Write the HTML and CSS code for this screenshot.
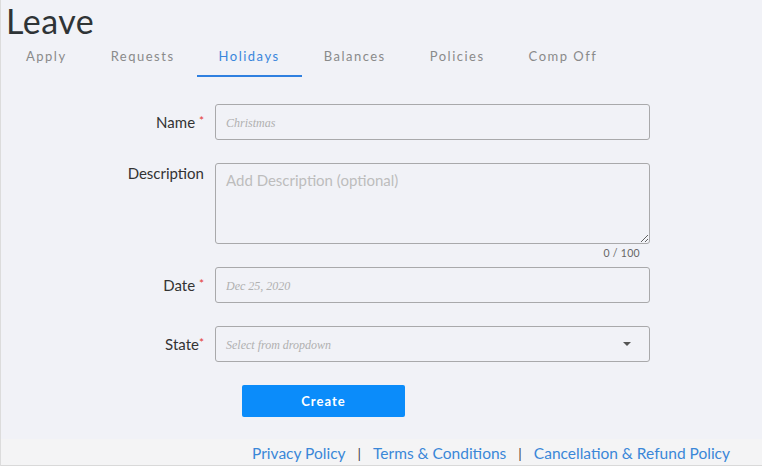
FILE: index.html
```html
<!DOCTYPE html>
<html>
<head>
<meta charset="utf-8">
<link rel="stylesheet" href="styles.css">
</head>
<body>
<div class="page">
  <main class="main">
    <h1 class="title">Leave</h1>
    <nav class="tabs">
      <a class="tab">Apply</a>
      <a class="tab">Requests</a>
      <a class="tab active">Holidays</a>
      <a class="tab">Balances</a>
      <a class="tab">Policies</a>
      <a class="tab">Comp Off</a>
    </nav>
    <form class="form">
      <label class="label">Name <span class="req">*</span></label>
      <input class="field input" type="text" placeholder="Christmas">

      <label class="label label-top">Description</label>
      <div class="area-wrap">
        <textarea class="field area" placeholder="Add Description (optional)"></textarea>
        <div class="counter">0 / 100</div>
      </div>

      <label class="label">Date <span class="req">*</span></label>
      <input class="field input" type="text" placeholder="Dec 25, 2020">

      <label class="label">State<span class="req">*</span></label>
      <div class="field select">
        <span class="select-ph">Select from dropdown</span>
        <span class="caret"></span>
      </div>

      <div></div>
      <div class="actions"><button type="button" class="btn">Create</button></div>
    </form>
  </main>
  <footer class="footer">
    <a class="flink">Privacy Policy</a>
    <span class="sep">|</span>
    <a class="flink">Terms &amp; Conditions</a>
    <span class="sep">|</span>
    <a class="flink">Cancellation &amp; Refund Policy</a>
  </footer>
</div>
</body>
</html>
```
FILE: styles.css
```css
* { box-sizing: border-box; }
html, body { margin: 0; padding: 0; }
body {
  font-family: "Lato", "Noto Sans", sans-serif;
  background: #f1f2f7;
  color: #333;
  width: 762px;
  height: 466px;
  overflow: hidden;
}
.page {
  height: 466px;
  border-left: 1px solid #dcdcdc;
  display: flex;
  flex-direction: column;
}
.main { flex: 1; }
.title {
  margin: 0;
  padding: 0 0 0 5px;
  font-size: 34px;
  font-weight: 400;
  line-height: 41px;
  letter-spacing: 0.5px;
  color: #2f3436;
}
.tabs {
  display: flex;
  margin-top: -1px;
  padding-left: 3px;
}
.tab {
  padding: 8px 22px 10px;
  font-size: 13px;
  line-height: 17px;
  letter-spacing: 1.5px;
  color: #8a8a8a;
  border-bottom: 2px solid transparent;
}
.tab.active {
  color: #3a86dc;
  border-bottom-color: #2f80e0;
}
.form {
  display: grid;
  grid-template-columns: 203px 435px;
  column-gap: 11px;
  row-gap: 23px;
  margin-top: 27px;
  align-items: center;
}
.label {
  text-align: right;
  font-size: 15px;
  color: #333;
}
.label-top { align-self: start; padding-top: 1px; }
.req { color: #e53935; font-size: 12px; vertical-align: top; }
.field {
  border: 1px solid #a9a9ab;
  border-radius: 3px;
  background: #f1f2f7;
  width: 435px;
  margin: 0;
  outline: none;
}
.input {
  height: 36px;
  padding: 2px 10px 0;
  font-family: "Liberation Serif", serif;
  font-style: italic;
  font-size: 12px;
}
.input::placeholder { color: #b0b0b0; }
.area-wrap { position: relative; }
.area {
  display: block;
  height: 81px;
  padding: 7px 10px;
  resize: vertical;
  font-family: "Lato", "Noto Sans", sans-serif;
  font-size: 15px;
}
.area::placeholder { color: #bdbdbd; }
.counter {
  position: absolute;
  right: 10px;
  top: 84px;
  font-size: 10.5px;
  color: #666;
  letter-spacing: 0.3px;
}
.select {
  height: 36px;
  padding: 3px 18px 0 10px;
  display: flex;
  align-items: center;
  justify-content: space-between;
}
.select-ph {
  font-family: "Liberation Serif", serif;
  font-style: italic;
  font-size: 12px;
  color: #b0b0b0;
}
.caret {
  width: 0; height: 0;
  margin-top: -3px;
  border-left: 4.5px solid transparent;
  border-right: 4.5px solid transparent;
  border-top: 4.5px solid #555;
}
.actions { padding-left: 27px; }
.btn {
  width: 163px;
  height: 32px;
  border: none;
  border-radius: 2px;
  background: #0b8cfa;
  color: #fff;
  font-family: "Lato", "Noto Sans", sans-serif;
  font-weight: 700;
  font-size: 13px;
  letter-spacing: 1px;
  margin: 0;
}
.footer {
  height: 27px;
  background: #f4f4f5;
  border-bottom: 1px solid #d9d9d9;
  display: flex;
  justify-content: flex-end;
  align-items: center;
  padding: 2px 32px 0 0;
  gap: 12px;
  font-size: 15.5px;
}
.flink { color: #3a87d8; }
.sep { color: #444; font-size: 14px; }
```
